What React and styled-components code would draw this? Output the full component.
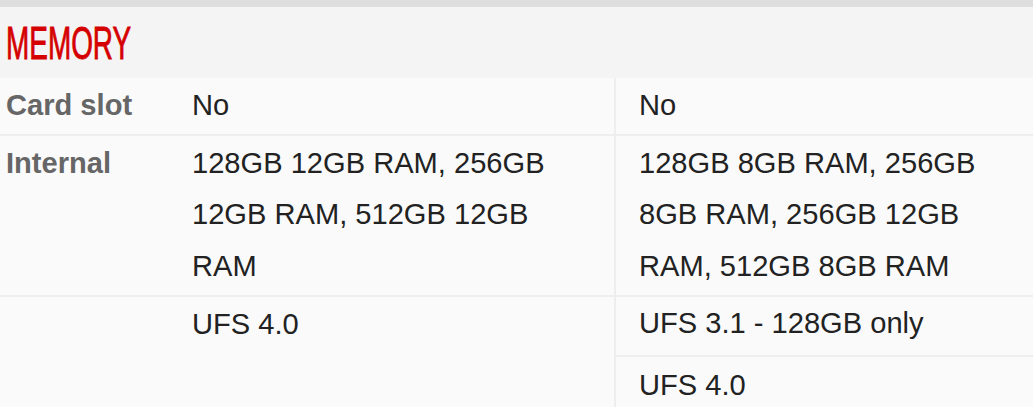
import React from 'react';
import styled, { createGlobalStyle } from 'styled-components';

const GlobalStyle = createGlobalStyle`
  html, body {
    margin: 0;
    padding: 0;
    background: #fafafa;
    overflow: hidden;
  }
  body {
    font-family: "Liberation Sans", Arial, sans-serif;
  }
`;

const Page = styled.div`
  width: 1033px;
  border-top: 7px solid #dedede;
`;

const SectionHeader = styled.div`
  height: 71px;
  background-color: #f4f4f4;
  display: flex;
  align-items: center;
  padding-left: 6px;
`;

const SectionTitle = styled.h2`
  margin: 0;
  display: inline-block;
  font-family: "Liberation Sans", Arial, sans-serif;
  font-weight: 400;
  font-size: 46px;
  line-height: 1;
  color: #d50000;
  -webkit-text-stroke: 0.9px #d50000;
  transform: scaleX(0.607);
  transform-origin: left center;
`;

const Row = styled.div`
  display: grid;
  grid-template-columns: 187px 427px 1fr;
  border-bottom: 2px solid #eeeeee;
  font-size: 29.1px;
  line-height: 51.2px;
`;

const Label = styled.div`
  padding: 2px 0 3px 6px;
  font-weight: 700;
  color: #666666;
`;

const Value = styled.div`
  padding: ${(p) => (p.$list ? '0' : '2px 24px 3px')};
  padding-left: ${(p) => (p.$list ? '0' : p.$last ? '23px' : '5px')};
  color: #222222;
  border-left: ${(p) => (p.$last ? '2px solid #eeeeee' : 'none')};
`;

const SubItem = styled.div`
  padding: 1px 24px 6px 23px;
  border-bottom: 2px solid #eeeeee;

  &:last-child {
    border-bottom: none;
    padding-top: 3px;
  }
`;

const rows = [
  { label: 'Card slot', a: 'No', b: ['No'] },
  {
    label: 'Internal',
    a: '128GB 12GB RAM, 256GB 12GB RAM, 512GB 12GB RAM',
    b: ['128GB 8GB RAM, 256GB 8GB RAM, 256GB 12GB RAM, 512GB 8GB RAM'],
  },
  { label: '', a: 'UFS 4.0', b: ['UFS 3.1 - 128GB only', 'UFS 4.0'] },
];

const App = () => {
  return (
    <>
      <GlobalStyle />
      <Page>
        <SectionHeader>
          <SectionTitle>MEMORY</SectionTitle>
        </SectionHeader>
        {rows.map((row, i) => (
          <Row key={i}>
            <Label>{row.label}</Label>
            <Value>{row.a}</Value>
            {row.b.length > 1 ? (
              <Value $last $list>
                {row.b.map((item) => (
                  <SubItem key={item}>{item}</SubItem>
                ))}
              </Value>
            ) : (
              <Value $last>{row.b[0]}</Value>
            )}
          </Row>
        ))}
      </Page>
    </>
  );
};

export default App;
